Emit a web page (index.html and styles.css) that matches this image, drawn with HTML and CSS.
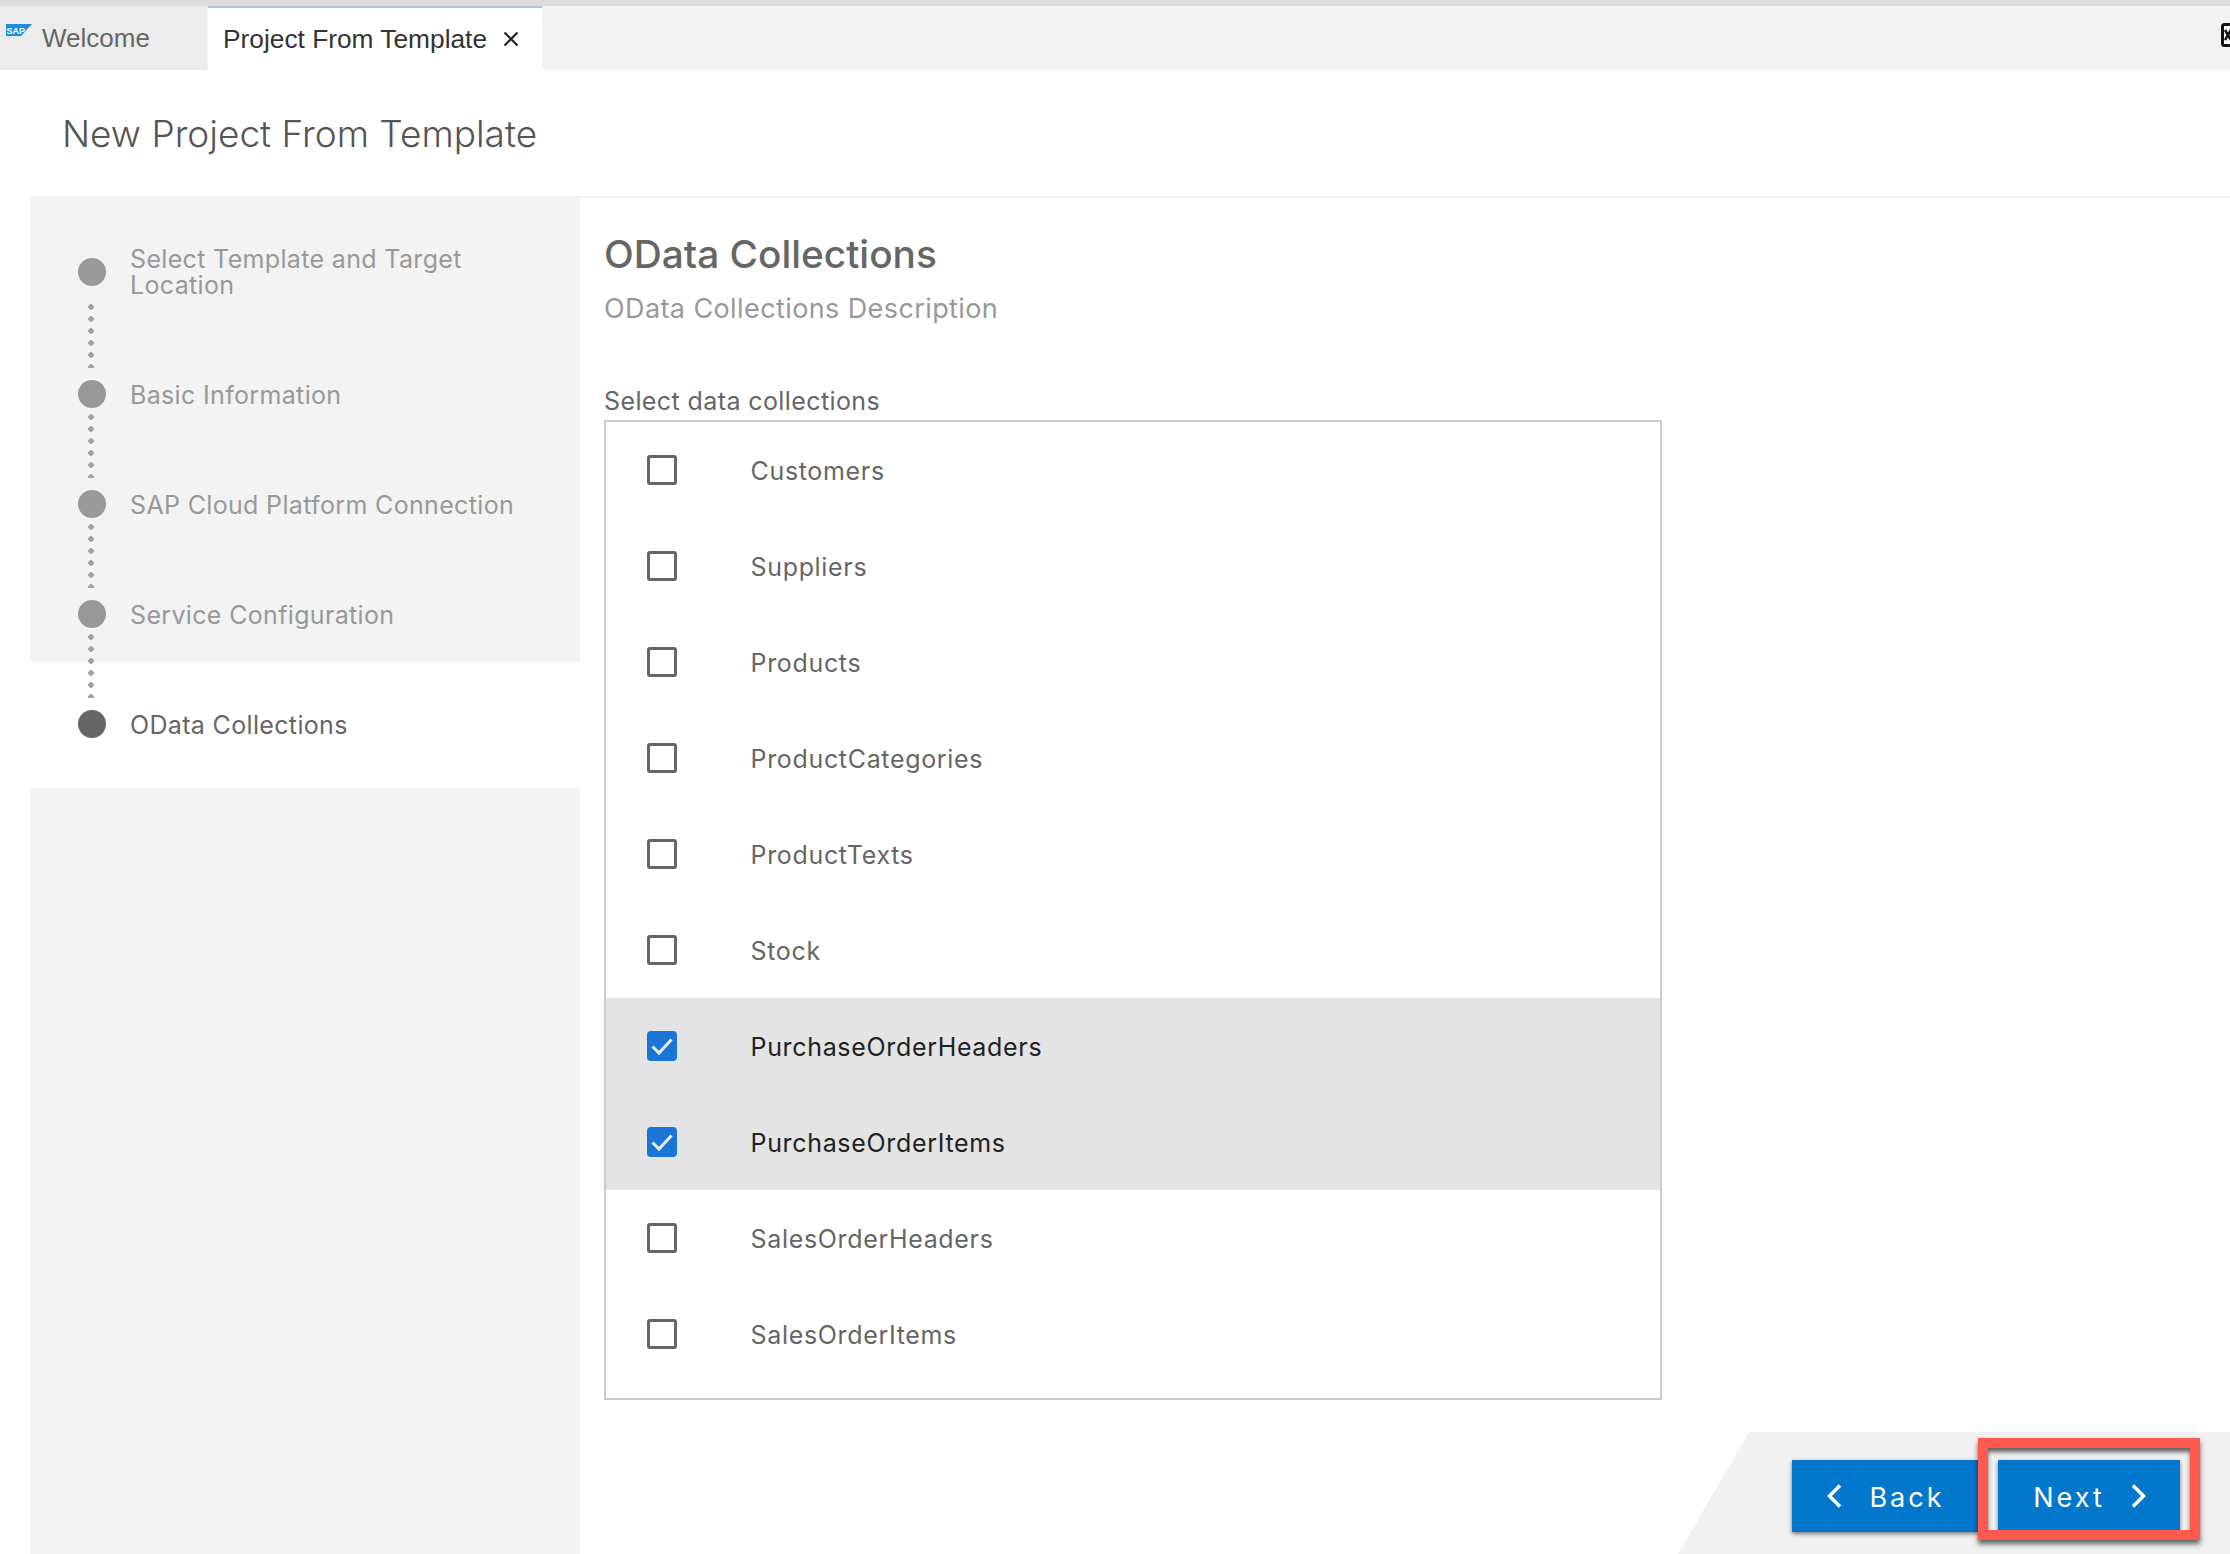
FILE: index.html
```html
<!DOCTYPE html>
<html lang="en">
<head>
    <meta charset="UTF-8">
    <title>New Project From Template</title>
    <link rel="stylesheet" href="styles.css">
</head>
<body>
    <div class="top-strip"></div>
    <div class="tab-bar">
        <div class="tab">
            <svg class="sap-logo" width="26" height="12" viewBox="0 0 26 12">
                <polygon points="0,0 26,0 15,12 0,12" fill="#1b8fe0"/>
                <text x="0.5" y="9.5" class="sap-text">SAP</text>
            </svg>
            <span>Welcome</span>
        </div>
        <div class="tab tab-active">
            <span>Project From Template</span>
            <svg class="tab-close" width="16" height="16" viewBox="0 0 16 16">
                <path d="M1.5 1.5L14.5 14.5M14.5 1.5L1.5 14.5" stroke="#222" stroke-width="2.2" fill="none"/>
            </svg>
        </div>
        <div class="tab-spacer"></div>
        <svg class="layout-icon" width="9" height="24" viewBox="0 0 9 24">
            <rect x="1.5" y="1.5" width="14" height="21" rx="2" fill="#fff" stroke="#111" stroke-width="3"/>
            <path d="M4 7L10 17M10 7L4 17" stroke="#111" stroke-width="2.5" fill="none"/>
        </svg>
    </div>

    <h1 class="page-title">New Project From Template</h1>

    <div class="wizard">
        <aside class="sidebar">
            <div class="step">
                <span class="step-dot"></span>
                <span class="step-label step-label-wrap">Select Template and Target Location</span>
            </div>
            <div class="step-line step-line-first"></div>
            <div class="step">
                <span class="step-dot"></span>
                <span class="step-label">Basic Information</span>
            </div>
            <div class="step-line"></div>
            <div class="step">
                <span class="step-dot"></span>
                <span class="step-label">SAP Cloud Platform Connection</span>
            </div>
            <div class="step-line"></div>
            <div class="step">
                <span class="step-dot"></span>
                <span class="step-label">Service Configuration</span>
            </div>
            <div class="step-line"></div>
            <div class="step step-current">
                <span class="step-dot"></span>
                <span class="step-label">OData Collections</span>
            </div>
        </aside>

        <main class="content">
            <h2 class="section-title">OData Collections</h2>
            <p class="section-desc">OData Collections Description</p>
            <div class="list-label">Select data collections</div>
            <div class="list-box">
                <div class="list-row"><span class="check"></span><span>Customers</span></div>
                <div class="list-row"><span class="check"></span><span>Suppliers</span></div>
                <div class="list-row"><span class="check"></span><span>Products</span></div>
                <div class="list-row"><span class="check"></span><span>ProductCategories</span></div>
                <div class="list-row"><span class="check"></span><span>ProductTexts</span></div>
                <div class="list-row"><span class="check"></span><span>Stock</span></div>
                <div class="list-row list-row-selected">
                    <span class="check check-on">
                        <svg width="30" height="30" viewBox="0 0 30 30"><path d="M5.5 15.5L12 22L24.5 8.5" stroke="#e8eef6" stroke-width="3" fill="none"/></svg>
                    </span>
                    <span>PurchaseOrderHeaders</span>
                </div>
                <div class="list-row list-row-selected">
                    <span class="check check-on">
                        <svg width="30" height="30" viewBox="0 0 30 30"><path d="M5.5 15.5L12 22L24.5 8.5" stroke="#e8eef6" stroke-width="3" fill="none"/></svg>
                    </span>
                    <span>PurchaseOrderItems</span>
                </div>
                <div class="list-row"><span class="check"></span><span>SalesOrderHeaders</span></div>
                <div class="list-row"><span class="check"></span><span>SalesOrderItems</span></div>
            </div>
        </main>
    </div>

    <div class="footer">
        <button class="nav-btn nav-btn-back">
            <svg width="18" height="26" viewBox="0 0 18 26"><path d="M15 2.5L4.5 13L15 23.5" stroke="#fff" stroke-width="3.5" fill="none"/></svg>
            <span>Back</span>
        </button>
        <button class="nav-btn nav-btn-next">
            <span>Next</span>
            <svg width="18" height="26" viewBox="0 0 18 26"><path d="M3 2.5L13.5 13L3 23.5" stroke="#fff" stroke-width="3.5" fill="none"/></svg>
        </button>
    </div>
    <div class="highlight-frame"></div>
</body>
</html>
```

FILE: styles.css
```css
html, body {
    height: 100%;
}
body {
    margin: 0;
    height: 1554px;
    overflow: hidden;
    position: relative;
    background-color: white;
    font-family: "Inter", "Liberation Sans", sans-serif;
    color: #666;
}
.top-strip {
    height: 6px;
    background-color: #dcdcdc;
}
.tab-bar {
    display: flex;
    height: 64px;
    background-color: #f3f3f3;
    font-family: "Liberation Sans", sans-serif;
    font-size: 26px;
    white-space: nowrap;
}
.tab {
    display: flex;
    align-items: center;
    flex-shrink: 0;
    width: 207px;
    background-color: #ececec;
    color: #666;
}
.sap-logo {
    margin: 0 10px 16px 6px;
}
.sap-text {
    font-family: "Liberation Sans", sans-serif;
    font-size: 9px;
    font-weight: bold;
    fill: white;
}
.tab-active {
    width: 334px;
    box-sizing: border-box;
    margin-left: 1px;
    padding: 0 0 0 15px;
    background-color: white;
    border-top: 2px solid #a5cbea;
    color: #333;
    font-size: 26.3px;
}
.tab-close {
    margin-left: 16px;
}
.tab-spacer {
    flex: 1;
}
.layout-icon {
    align-self: center;
    margin-bottom: 6px;
}
.page-title {
    margin: 0;
    height: 126px;
    box-sizing: border-box;
    padding: 38px 0 0 62px;
    font-family: "Inter", sans-serif;
    font-size: 37px;
    line-height: 52px;
    font-weight: 300;
    color: #555;
}
.wizard {
    display: flex;
    height: 1358px;
    margin-left: 30px;
}
.sidebar {
    width: 550px;
    flex-shrink: 0;
    padding-top: 46px;
    box-sizing: border-box;
    background: linear-gradient(#f3f3f3 466px, white 466px, white 592px, #f3f3f3 592px);
}
.step {
    display: flex;
    align-items: center;
    height: 60px;
    padding-left: 48px;
}
.step-dot {
    width: 28px;
    height: 28px;
    flex-shrink: 0;
    border-radius: 50%;
    background-color: #999;
}
.step-label {
    margin: 2px 0 0 24px;
    font-size: 25px;
    line-height: 26px;
    letter-spacing: 0.34px;
    color: #999;
}
.step-label-wrap {
    width: 400px;
    margin-top: 0;
}
.step-current .step-dot {
    background-color: #666;
}
.step-current .step-label {
    color: #666;
}
.step-line {
    height: 64px;
    width: 6px;
    margin: -10px 0 -4px 58px;
    background-image: radial-gradient(circle, #a3a3a3 2.6px, transparent 3px);
    background-size: 6px 12px;
    background-position: 0 -3px;
}
.step-line-first {
    height: 66px;
    margin-top: 0;
    background-position: 0 -1px;
}
.content {
    flex: 1;
    padding: 31px 0 0 24px;
    border-top: 2px solid #f0f0f0;
}
.section-title {
    margin: 0;
    font-size: 38.8px;
    line-height: 50px;
    font-weight: 500;
    color: #666;
}
.section-desc {
    margin: 13px 0 0;
    font-size: 27px;
    line-height: 34px;
    letter-spacing: 0.4px;
    color: #999;
}
.list-label {
    margin-top: 58px;
    height: 34px;
    font-size: 25px;
    line-height: 34px;
    letter-spacing: 0.4px;
    color: #666;
}
.list-box {
    width: 1058px;
    height: 980px;
    box-sizing: border-box;
    border: 2px solid #ccc;
    margin-top: 2px;
}
.list-row {
    display: flex;
    align-items: center;
    height: 96px;
    box-sizing: border-box;
    padding: 2px 0 0 41px;
    font-size: 25px;
    letter-spacing: 0.67px;
    color: #666;
}
.list-row-selected {
    background-color: #e4e4e4;
    color: #222;
}
.check {
    width: 30px;
    height: 30px;
    box-sizing: border-box;
    margin: -2px 73.5px 0 0;
    flex-shrink: 0;
    border: 3px solid #666;
    border-radius: 3px;
}
.check-on {
    border: none;
    border-radius: 4px;
    background-color: #1976d6;
}
.footer {
    position: absolute;
    right: 0;
    bottom: 0;
    width: 552px;
    height: 122px;
    display: flex;
    box-sizing: border-box;
    padding: 28px 50px 0 114px;
    gap: 20px;
    background-color: #f1f1f1;
    clip-path: polygon(71px 0, 100% 0, 100% 100%, 0 100%);
}
.nav-btn {
    display: flex;
    align-items: center;
    justify-content: center;
    flex: none;
    height: 72px;
    padding: 0;
    border: none;
    background-color: #0277cc;
    color: white;
    font-family: "Inter", sans-serif;
    font-size: 27px;
    letter-spacing: 3px;
    box-shadow: 0 2px 4px rgba(0, 0, 0, 0.5);
}
.nav-btn span {
    padding-top: 2px;
}
.nav-btn-back {
    width: 186px;
    gap: 26px;
}
.nav-btn-next {
    width: 182px;
    padding-left: 3px;
    gap: 25px;
}
.highlight-frame {
    position: absolute;
    left: 1978px;
    top: 1438px;
    width: 222px;
    height: 102px;
    box-sizing: border-box;
    border: 10px solid #ff5a4f;
    box-shadow: 0 4px 5px rgba(0, 0, 0, 0.6), inset 0 4px 4px rgba(0, 0, 0, 0.6);
}
```
